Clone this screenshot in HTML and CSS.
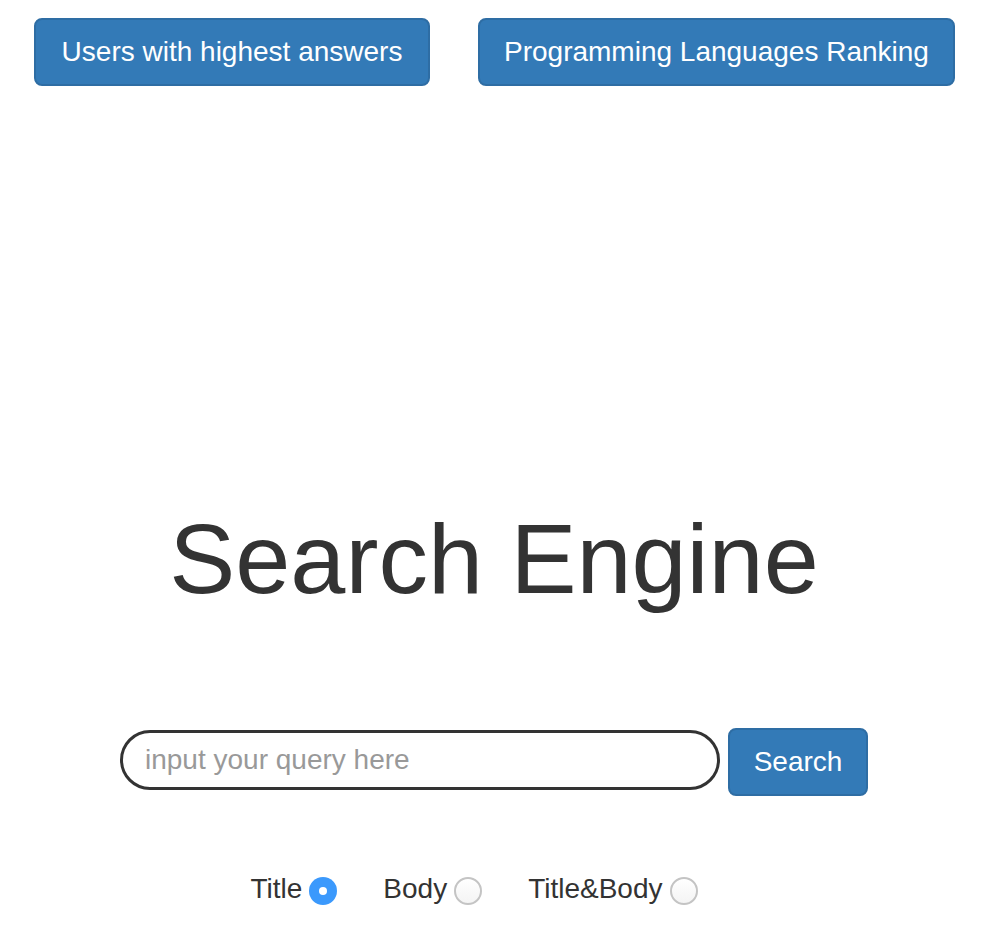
FILE: index.html
```html
<!DOCTYPE html>
<html>
<head>
<meta charset="utf-8">
<title>Search Engine</title>
<link rel="stylesheet" href="styles.css">
</head>
<body>
<header class="top-bar">
  <button class="btn btn-primary users-btn">Users with highest answers</button>
  <button class="btn btn-primary">Programming Languages Ranking</button>
</header>
<main class="main">
  <h1 class="title">Search Engine</h1>
  <form class="search-group">
    <input class="query" type="text" placeholder="input your query here">
    <button class="btn btn-primary search-btn" type="button">Search</button>
  </form>
  <div class="options">
    <label class="option">Title <input type="radio" name="scope" checked></label>
    <label class="option">Body <input type="radio" name="scope"></label>
    <label class="option">Title&amp;Body <input type="radio" name="scope"></label>
  </div>
</main>
</body>
</html>
```
FILE: styles.css
```css
html, body {
  margin: 0;
  padding: 0;
  background: #fff;
}
body {
  font-family: "Liberation Sans", Arial, Helvetica, sans-serif;
  color: #333;
  width: 988px;
}
.top-bar {
  display: flex;
  gap: 48px;
  padding: 18px 0 0 34px;
}
.btn {
  font-family: "Liberation Sans", Arial, Helvetica, sans-serif;
  font-size: 28px;
  line-height: 40px;
  padding: 12px 24px;
  border-radius: 8px;
  border: 2px solid #2e6da4;
  cursor: pointer;
  margin: 0;
}
.btn-primary {
  background: #337ab7;
  color: #fff;
}
.users-btn {
  box-sizing: border-box;
  width: 396px;
}
.main {
  display: flex;
  flex-direction: column;
  align-items: center;
}
.title {
  margin: 424px 0 0;
  font-size: 99px;
  line-height: 98px;
  font-weight: normal;
  color: #333;
}
.search-group {
  margin: 120px 0 0;
  display: flex;
  align-items: flex-start;
  gap: 8px;
}
.query {
  box-sizing: border-box;
  width: 600px;
  height: 60px;
  margin-top: 2px;
  border: 3px solid #333;
  border-radius: 30px;
  padding: 0 22px;
  font-family: "Liberation Sans", Arial, Helvetica, sans-serif;
  font-size: 28px;
  color: #333;
  outline: none;
}
.query::placeholder {
  color: #999;
}
.search-btn {
  width: 140px;
  padding: 12px 0;
}
.options {
  margin-top: 73px;
  display: flex;
  gap: 46px;
  padding-right: 40px;
  height: 40px;
  align-items: center;
}
.option {
  display: flex;
  align-items: center;
  gap: 7px;
  font-size: 28px;
  line-height: 40px;
  color: #333;
}
.option input {
  appearance: none;
  -webkit-appearance: none;
  margin: 0;
  width: 28px;
  height: 28px;
  border-radius: 50%;
  box-sizing: border-box;
  border: 2px solid #c4c4c4;
  background: linear-gradient(#fff, #f4f4f4);
  position: relative;
  top: 2px;
}
.option input:checked {
  border: none;
  background: #3b99fc;
}
.option input:checked::after {
  content: "";
  position: absolute;
  left: 10px;
  top: 10px;
  width: 8px;
  height: 8px;
  border-radius: 50%;
  background: #fff;
}
```
